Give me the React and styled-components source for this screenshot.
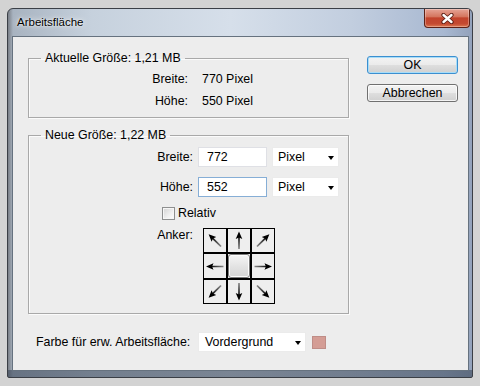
import React from 'react';
import styled, { createGlobalStyle } from 'styled-components';

const GlobalStyle = createGlobalStyle`
  html, body { margin: 0; padding: 0; background: #d3d3d3; }
  body {
    font-family: "Liberation Sans", Arial, sans-serif;
    font-size: 12.4px;
    color: #000;
    width: 480px;
    height: 386px;
    overflow: hidden;
  }
  * { box-sizing: border-box; }
`;

const Page = styled.div`
  width: 480px;
  height: 386px;
  padding: 8px 7px;
  background: #d3d3d3;
`;

const Window = styled.div`
  width: 466px;
  height: 370px;
  display: flex;
  flex-direction: column;
  border: 1px solid #3b3f46;
  border-radius: 6px 6px 2px 2px;
  background:
    linear-gradient(to bottom, transparent calc(100% - 7px), rgba(60, 72, 90, 0.6) calc(100% - 7px)),
    linear-gradient(to right, #7a7f87 0px, #a8b3c0 5px, #c6d1dd 18%, #d6dfea 48%, #c2cedf 74%, #a8b8d1 94%, #93a2bb 100%);
  overflow: hidden;
`;

const TitleBar = styled.div`
  height: 27px;
  display: flex;
  align-items: flex-start;
  padding-left: 9px;
`;

const TitleText = styled.div`
  padding-top: 6px;
  line-height: 15px;
  font-size: 11.5px;
  color: #000;
  text-shadow: 0 0 6px rgba(255, 255, 255, 0.95), 0 0 2px rgba(255, 255, 255, 0.9);
`;

const CloseButton = styled.div`
  margin-left: auto;
  margin-right: 2px;
  width: 46px;
  height: 19px;
  display: flex;
  align-items: center;
  justify-content: center;
  border: 1px solid #5e2116;
  border-top: none;
  border-radius: 0 0 4px 4px;
  background: linear-gradient(to bottom, #e6a496 0%, #d5765f 42%, #c2432c 50%, #c44a31 82%, #de7a52 100%);
  box-shadow: inset 0 0 0 1px rgba(255, 255, 255, 0.3);
`;

const Client = styled.div`
  flex: 1;
  margin: 0 3px 6px 4px;
  border: 1px solid #66727f;
  background: #ededed;
  padding: 14px 0 0 15px;
  display: flex;
  flex-direction: column;
`;

const TopSection = styled.div`
  display: flex;
  align-items: flex-start;
  gap: 18px;
`;

const GroupsColumn = styled.div`
  width: 321px;
  display: flex;
  flex-direction: column;
  gap: 10px;
`;

const Group = styled.fieldset`
  margin: 0;
  padding: 0;
  min-width: 0;
  border: 1px solid #a9a9a9;
  box-shadow: inset 1px 1px 0 #fbfbfb, 1px 1px 0 #fbfbfb;
`;

const Legend = styled.legend`
  margin-left: 12px;
  padding: 0 4px;
  line-height: 14px;
`;

const InfoGrid = styled.div`
  display: grid;
  grid-template-columns: 159px auto;
  grid-auto-rows: 20px;
  column-gap: 14px;
  row-gap: 2px;
  align-items: center;
  padding: 4px 0 6px;
`;

const RightLabel = styled.div`
  text-align: right;
  line-height: 14px;
`;

const Value = styled.div`
  line-height: 14px;
`;

const FormBody = styled.div`
  display: flex;
  flex-direction: column;
  padding: 5px 0 9px;
`;

const FieldRow = styled.div`
  display: flex;
  align-items: center;
  height: 20px;
  margin-top: ${(p) => p.$top || 0}px;
`;

const FieldLabel = styled.div`
  width: 164px;
  text-align: right;
  line-height: 14px;
  margin-right: 5px;
`;

const TextInput = styled.input`
  width: 69px;
  height: 20px;
  margin: 0 5px 0 0;
  padding: 0 0 0 8px;
  border: 1px solid ${(p) => (p.$focused ? '#86aed6' : '#dfe0e5')};
  background: #fff;
  font-family: "Liberation Sans", Arial, sans-serif;
  font-size: 12.4px;
  color: #000;
  outline: none;
`;

const Dropdown = styled.div`
  width: ${(p) => p.$width}px;
  height: 20px;
  flex: none;
  display: flex;
  align-items: center;
  justify-content: space-between;
  padding: 0 4px 0 ${(p) => p.$padLeft || 6}px;
  background: #fff;
  border: 1px solid #ebebeb;
  line-height: 14px;
`;

const DropArrow = styled.span`
  width: 0;
  height: 0;
  border-left: 3.5px solid transparent;
  border-right: 3.5px solid transparent;
  border-top: 4px solid #000;
  margin-top: 2px;
`;

const CheckRow = styled.label`
  display: flex;
  align-items: center;
  height: 16px;
  margin-top: 8px;
  padding-left: 133px;
  gap: 3px;
  line-height: 14px;
`;

const CheckBox = styled.span`
  width: 13px;
  height: 13px;
  border: 1px solid #8e8f8f;
  background: linear-gradient(135deg, #d3d3d3 0%, #f0f0f0 60%, #fdfdfd 100%);
  box-shadow: inset 0 0 0 1px #f6f6f6;
`;

const AnchorRow = styled.div`
  display: flex;
  align-items: flex-start;
  margin-top: 7px;
`;

const AnchorLabel = styled.div`
  width: 164px;
  text-align: right;
  line-height: 14px;
  margin-right: 10px;
`;

const AnchorGrid = styled.div`
  display: grid;
  grid-template-columns: 22px 22px 22px;
  grid-template-rows: 23px 24px 23px;
  gap: 2px;
  padding: 1px;
  background: #000;
`;

const AnchorCell = styled.div`
  background: #eeeeee;
  display: flex;
  align-items: center;
  justify-content: center;
`;

const CenterKnob = styled.div`
  width: 100%;
  height: 100%;
  border: 1px solid #7d7d7d;
  border-radius: 3px;
  background: linear-gradient(to bottom, #f5f5f5 0%, #e2e2e2 55%, #d6d6d6 100%);
  box-shadow: inset 0 0 0 1px #fdfdfd;
`;

const ButtonColumn = styled.div`
  width: 91px;
  padding-top: 5px;
  display: flex;
  flex-direction: column;
  gap: 10px;
`;

const DialogButton = styled.div`
  height: 18px;
  display: flex;
  align-items: center;
  justify-content: center;
  border: 1px solid ${(p) => (p.$default ? '#3b8fd0' : '#707070')};
  border-radius: 3px;
  background: linear-gradient(to bottom, #f3f3f3 0%, #ebebeb 48%, #dedede 52%, #d0d0d0 100%);
  box-shadow: inset 0 0 0 1px ${(p) => (p.$default ? '#a8ddf8' : 'rgba(255,255,255,0.75)')};
  line-height: 14px;
`;

const BottomRow = styled.div`
  display: flex;
  align-items: center;
  margin-top: 18px;
  padding-left: 8px;
`;

const BottomLabel = styled.div`
  width: 162px;
  flex: none;
  white-space: nowrap;
  line-height: 14px;
`;

const Swatch = styled.div`
  width: 14px;
  height: 13px;
  margin-left: 6px;
  background: #d49d95;
  border: 1px solid #bf8d87;
`;

const ArrowIcon = ({ angle }) => {
  const id = `shaft${angle < 0 ? 'm' + -angle : angle}`;
  return (
    <svg width="22" height="23" viewBox="0 0 22 23">
      <defs>
        <linearGradient id={id} gradientUnits="userSpaceOnUse" x1="11" y1="20" x2="11" y2="8">
          <stop offset="0" stopColor="#8a8a8a" />
          <stop offset="1" stopColor="#111" />
        </linearGradient>
      </defs>
      <g transform={`rotate(${angle} 11 11.5)`}>
        <line x1="11" y1="20" x2="11" y2="8" stroke={`url(#${id})`} strokeWidth="1.7" />
        <path d="M11 2.5 L14.3 10 L11 8.6 L7.7 10 Z" fill="#000" />
      </g>
    </svg>
  );
};

const CloseGlyph = () => (
  <svg width="13" height="11" viewBox="0 0 13 11">
    <path d="M2.5 2 L10.5 9 M10.5 2 L2.5 9" stroke="#5a1e14" strokeWidth="4.2" strokeLinecap="round" />
    <path d="M2.5 2 L10.5 9 M10.5 2 L2.5 9" stroke="#fff" strokeWidth="2.4" strokeLinecap="round" />
  </svg>
);

const anchors = [-45, 0, 45, -90, null, 90, -135, 180, 135];

export default function App() {
  return (
    <>
      <GlobalStyle />
      <Page>
        <Window>
          <TitleBar>
            <TitleText>Arbeitsfläche</TitleText>
            <CloseButton>
              <CloseGlyph />
            </CloseButton>
          </TitleBar>
          <Client>
            <TopSection>
              <GroupsColumn>
                <Group>
                  <Legend>Aktuelle Größe: 1,21 MB</Legend>
                  <InfoGrid>
                    <RightLabel>Breite:</RightLabel>
                    <Value>770 Pixel</Value>
                    <RightLabel>Höhe:</RightLabel>
                    <Value>550 Pixel</Value>
                  </InfoGrid>
                </Group>
                <Group>
                  <Legend>Neue Größe: 1,22 MB</Legend>
                  <FormBody>
                    <FieldRow>
                      <FieldLabel>Breite:</FieldLabel>
                      <TextInput readOnly value="772" />
                      <Dropdown $width={67} $padLeft={5}>
                        <span>Pixel</span>
                        <DropArrow />
                      </Dropdown>
                    </FieldRow>
                    <FieldRow $top={10}>
                      <FieldLabel>Höhe:</FieldLabel>
                      <TextInput readOnly value="552" $focused />
                      <Dropdown $width={67} $padLeft={5}>
                        <span>Pixel</span>
                        <DropArrow />
                      </Dropdown>
                    </FieldRow>
                    <CheckRow>
                      <CheckBox />
                      <span>Relativ</span>
                    </CheckRow>
                    <AnchorRow>
                      <AnchorLabel>Anker:</AnchorLabel>
                      <AnchorGrid>
                        {anchors.map((a, i) => (
                          <AnchorCell key={i}>
                            {a === null ? <CenterKnob /> : <ArrowIcon angle={a} />}
                          </AnchorCell>
                        ))}
                      </AnchorGrid>
                    </AnchorRow>
                  </FormBody>
                </Group>
              </GroupsColumn>
              <ButtonColumn>
                <DialogButton $default>OK</DialogButton>
                <DialogButton>Abbrechen</DialogButton>
              </ButtonColumn>
            </TopSection>
            <BottomRow>
              <BottomLabel>Farbe für erw. Arbeitsfläche:</BottomLabel>
              <Dropdown $width={108} $padLeft={6}>
                <span>Vordergrund</span>
                <DropArrow />
              </Dropdown>
              <Swatch />
            </BottomRow>
          </Client>
        </Window>
      </Page>
    </>
  );
}
